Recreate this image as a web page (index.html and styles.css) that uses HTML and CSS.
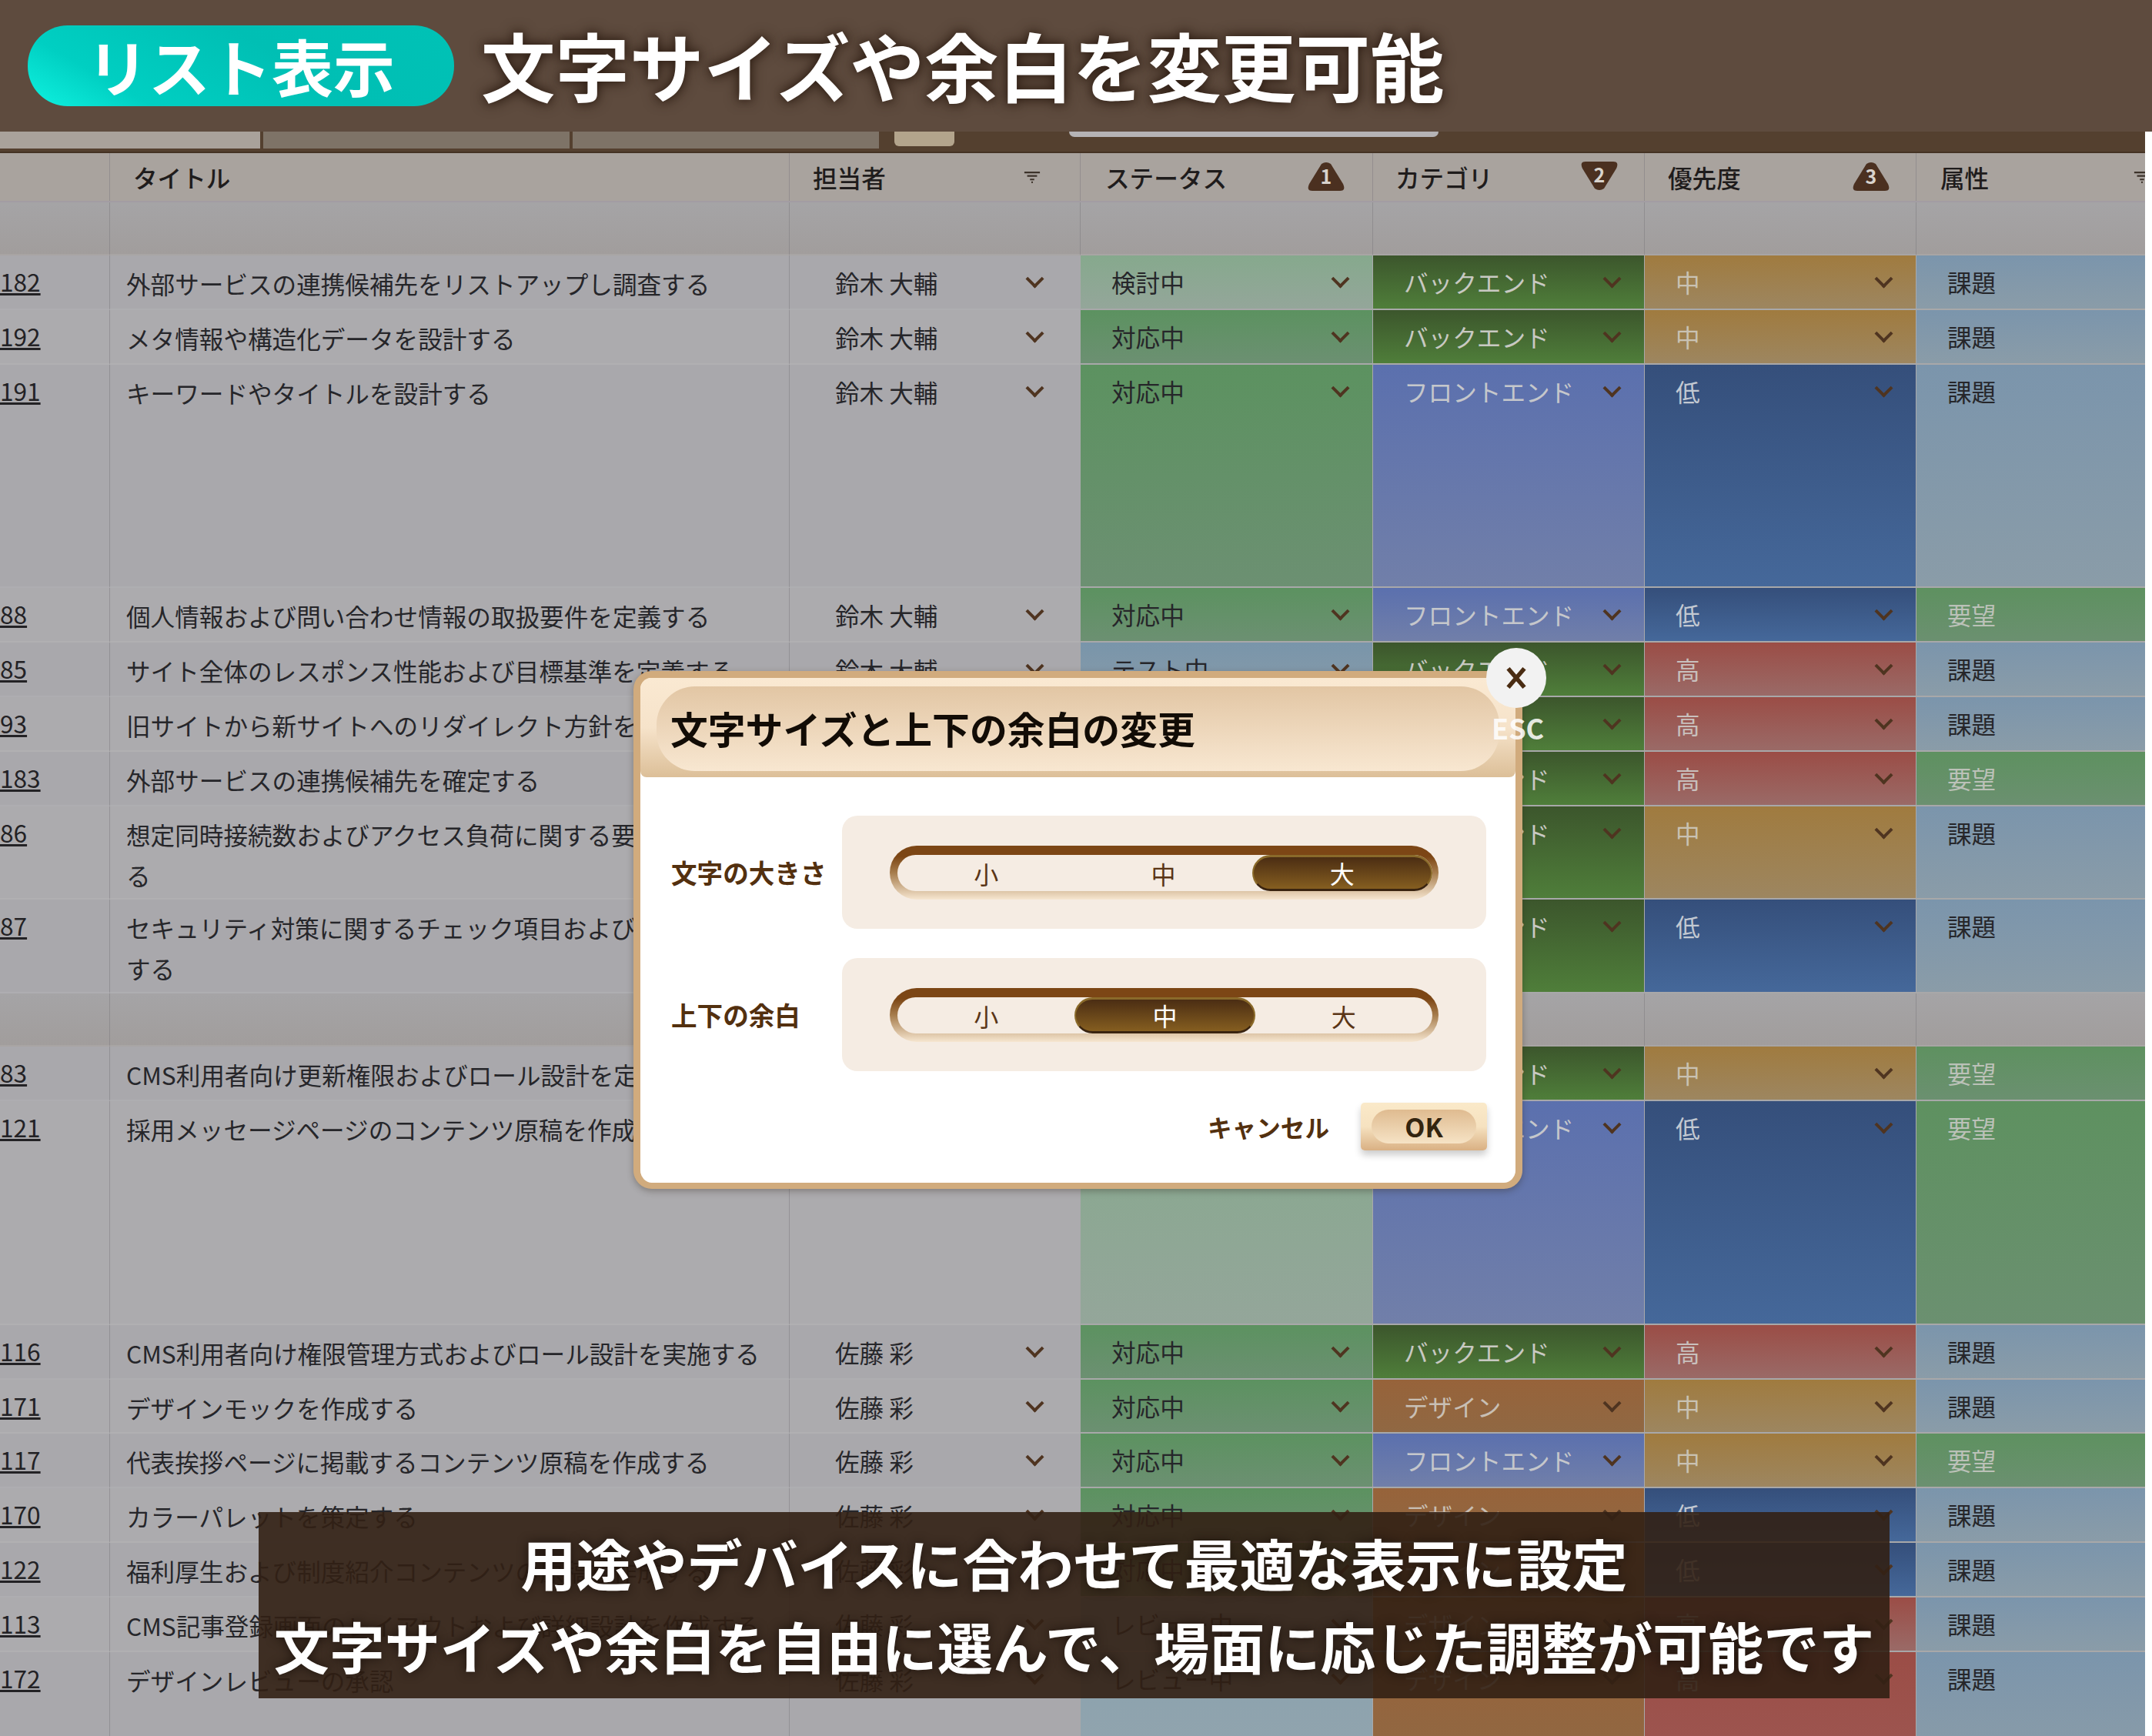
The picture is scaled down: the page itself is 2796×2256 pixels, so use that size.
FILE: index.html
```html
<!DOCTYPE html>
<html lang="ja">
<head>
    <meta charset="UTF-8">
    <meta name="viewport" content="width=device-width, initial-scale=1.0">
    <title>リスト表示</title>
    <link rel="stylesheet" href="styles.css">
</head>
<body>
    <header class="topbar">
        <span class="topbar-pill">リスト表示</span>
        <h1 class="topbar-title">文字サイズや余白を変更可能</h1>
    </header>

    <div class="tabstrip">
        <span class="tab tab-on"></span>
        <span class="tab"></span>
        <span class="tab"></span>
        <span class="tab-add"></span>
        <span class="tab-search"></span>
    </div>

    <div class="table">
        <div class="row head">
            <div class="cell"></div>
            <div class="cell head-title">タイトル</div>
            <div class="cell head-person">担当者
                <svg class="filter" viewBox="0 0 24 18"><path d="M1 2h22M5 7h14M9 12h6M11 16h2" stroke="#3d332b" stroke-width="2.4" fill="none"/></svg>
            </div>
            <div class="cell head-status">ステータス
                <svg class="badge" viewBox="0 0 48 38"><path d="M18 3Q24 -1 30 3L46 29Q50 38 42 38H6Q-2 38 2 29Z" fill="#4b3020"/><text x="24" y="29" text-anchor="middle">1</text></svg>
            </div>
            <div class="cell head-cat">カテゴリ
                <svg class="badge" viewBox="0 0 48 38"><path d="M18 35Q24 39 30 35L46 9Q50 0 42 0H6Q-2 0 2 9Z" fill="#4b3020"/><text x="24" y="27" text-anchor="middle">2</text></svg>
            </div>
            <div class="cell head-pri">優先度
                <svg class="badge" viewBox="0 0 48 38"><path d="M18 3Q24 -1 30 3L46 29Q50 38 42 38H6Q-2 38 2 29Z" fill="#4b3020"/><text x="24" y="29" text-anchor="middle">3</text></svg>
            </div>
            <div class="cell head-attr">属性
                <svg class="filter" viewBox="0 0 24 18"><path d="M1 2h22M5 7h14M9 12h6M11 16h2" stroke="#3d332b" stroke-width="2.4" fill="none"/></svg>
            </div>
        </div>

        <div class="row group group-first"><div class="cell"></div><div class="cell"></div><div class="cell"></div><div class="cell"></div><div class="cell"></div><div class="cell"></div><div class="cell"></div></div>

        <div class="row">
            <div class="cell id">182</div><div class="cell name">外部サービスの連携候補先をリストアップし調査する</div>
            <div class="cell person sel">鈴木 大輔</div><div class="cell st-review sel">検討中</div><div class="cell cat-back sel">バックエンド</div><div class="cell pri-mid sel">中</div><div class="cell attr-issue">課題</div>
        </div>
        <div class="row">
            <div class="cell id">192</div><div class="cell name">メタ情報や構造化データを設計する</div>
            <div class="cell person sel">鈴木 大輔</div><div class="cell st-doing sel">対応中</div><div class="cell cat-back sel">バックエンド</div><div class="cell pri-mid sel">中</div><div class="cell attr-issue">課題</div>
        </div>
        <div class="row tall">
            <div class="cell id">191</div><div class="cell name">キーワードやタイトルを設計する</div>
            <div class="cell person sel">鈴木 大輔</div><div class="cell st-doing sel">対応中</div><div class="cell cat-front sel">フロントエンド</div><div class="cell pri-low sel">低</div><div class="cell attr-issue">課題</div>
        </div>
        <div class="row">
            <div class="cell id">88</div><div class="cell name">個人情報および問い合わせ情報の取扱要件を定義する</div>
            <div class="cell person sel">鈴木 大輔</div><div class="cell st-doing sel">対応中</div><div class="cell cat-front sel">フロントエンド</div><div class="cell pri-low sel">低</div><div class="cell attr-want">要望</div>
        </div>
        <div class="row">
            <div class="cell id">85</div><div class="cell name">サイト全体のレスポンス性能および目標基準を定義する</div>
            <div class="cell person sel">鈴木 大輔</div><div class="cell st-test sel">テスト中</div><div class="cell cat-back sel">バックエンド</div><div class="cell pri-high sel">高</div><div class="cell attr-issue">課題</div>
        </div>
        <div class="row">
            <div class="cell id">93</div><div class="cell name">旧サイトから新サイトへのリダイレクト方針を</div>
            <div class="cell person"></div><div class="cell st-doing"></div><div class="cell cat-back sel"></div><div class="cell pri-high sel">高</div><div class="cell attr-issue">課題</div>
        </div>
        <div class="row">
            <div class="cell id">183</div><div class="cell name">外部サービスの連携候補先を確定する</div>
            <div class="cell person"></div><div class="cell st-doing"></div><div class="cell cat-back sel">バックエンド</div><div class="cell pri-high sel">高</div><div class="cell attr-want">要望</div>
        </div>
        <div class="row two">
            <div class="cell id">86</div><div class="cell name">想定同時接続数およびアクセス負荷に関する要<br>る</div>
            <div class="cell person"></div><div class="cell st-doing"></div><div class="cell cat-back sel">バックエンド</div><div class="cell pri-mid sel">中</div><div class="cell attr-issue">課題</div>
        </div>
        <div class="row two">
            <div class="cell id">87</div><div class="cell name">セキュリティ対策に関するチェック項目および<br>する</div>
            <div class="cell person"></div><div class="cell st-doing"></div><div class="cell cat-back sel">バックエンド</div><div class="cell pri-low sel">低</div><div class="cell attr-issue">課題</div>
        </div>

        <div class="row group"><div class="cell"></div><div class="cell"></div><div class="cell"></div><div class="cell"></div><div class="cell"></div><div class="cell"></div><div class="cell"></div></div>

        <div class="row">
            <div class="cell id">83</div><div class="cell name">CMS利用者向け更新権限およびロール設計を定</div>
            <div class="cell person"></div><div class="cell st-doing"></div><div class="cell cat-back sel">バックエンド</div><div class="cell pri-mid sel">中</div><div class="cell attr-want">要望</div>
        </div>
        <div class="row tall">
            <div class="cell id">121</div><div class="cell name">採用メッセージページのコンテンツ原稿を作成</div>
            <div class="cell person"></div><div class="cell st-review"></div><div class="cell cat-front sel">フロントエンド</div><div class="cell pri-low sel">低</div><div class="cell attr-want">要望</div>
        </div>
        <div class="row">
            <div class="cell id">116</div><div class="cell name">CMS利用者向け権限管理方式およびロール設計を実施する</div>
            <div class="cell person sel">佐藤 彩</div><div class="cell st-doing sel">対応中</div><div class="cell cat-back sel">バックエンド</div><div class="cell pri-high sel">高</div><div class="cell attr-issue">課題</div>
        </div>
        <div class="row">
            <div class="cell id">171</div><div class="cell name">デザインモックを作成する</div>
            <div class="cell person sel">佐藤 彩</div><div class="cell st-doing sel">対応中</div><div class="cell cat-design sel">デザイン</div><div class="cell pri-mid sel">中</div><div class="cell attr-issue">課題</div>
        </div>
        <div class="row">
            <div class="cell id">117</div><div class="cell name">代表挨拶ページに掲載するコンテンツ原稿を作成する</div>
            <div class="cell person sel">佐藤 彩</div><div class="cell st-doing sel">対応中</div><div class="cell cat-front sel">フロントエンド</div><div class="cell pri-mid sel">中</div><div class="cell attr-want">要望</div>
        </div>
        <div class="row">
            <div class="cell id">170</div><div class="cell name">カラーパレットを策定する</div>
            <div class="cell person sel">佐藤 彩</div><div class="cell st-doing sel">対応中</div><div class="cell cat-design sel">デザイン</div><div class="cell pri-low sel">低</div><div class="cell attr-issue">課題</div>
        </div>
        <div class="row">
            <div class="cell id">122</div><div class="cell name">福利厚生および制度紹介コンテンツの原稿を作成する</div>
            <div class="cell person sel">佐藤 彩</div><div class="cell st-doing sel">対応中</div><div class="cell cat-design sel">デザイン</div><div class="cell pri-low sel">低</div><div class="cell attr-issue">課題</div>
        </div>
        <div class="row">
            <div class="cell id">113</div><div class="cell name">CMS記事登録画面のレイアウトおよび詳細設計を作成する</div>
            <div class="cell person sel">佐藤 彩</div><div class="cell st-check sel">レビュー中</div><div class="cell cat-design sel">デザイン</div><div class="cell pri-high sel">高</div><div class="cell attr-issue">課題</div>
        </div>
        <div class="row last">
            <div class="cell id">172</div><div class="cell name">デザインレビューの承認</div>
            <div class="cell person sel">佐藤 彩</div><div class="cell st-check sel">レビュー中</div><div class="cell cat-design sel">デザイン</div><div class="cell pri-high sel">高</div><div class="cell attr-issue">課題</div>
        </div>
    </div>

    <div class="modal">
        <div class="modal-head">
            <h2 class="modal-title">文字サイズと上下の余白の変更</h2>
        </div>
        <div class="modal-body">
            <div class="setting">
                <span class="setting-label">文字の大きさ</span>
                <div class="setting-panel">
                    <div class="toggle">
                        <div class="toggle-inner">
                            <span class="seg">小</span>
                            <span class="seg">中</span>
                            <span class="seg seg-on">大</span>
                        </div>
                    </div>
                </div>
            </div>
            <div class="setting">
                <span class="setting-label">上下の余白</span>
                <div class="setting-panel">
                    <div class="toggle">
                        <div class="toggle-inner">
                            <span class="seg">小</span>
                            <span class="seg seg-on">中</span>
                            <span class="seg">大</span>
                        </div>
                    </div>
                </div>
            </div>
            <div class="modal-foot">
                <span class="cancel">キャンセル</span>
                <button class="ok"><span class="ok-inner">OK</span></button>
            </div>
        </div>
    </div>
    <div class="close">
        <svg viewBox="0 0 24 24"><path d="M6 5L18 19M18 5L6 19" stroke="#4a2c12" stroke-width="3.2" fill="none"/></svg>
    </div>
    <span class="esc">ESC</span>

    <div class="caption">
        <p>用途やデバイスに合わせて最適な表示に設定</p>
        <p>文字サイズや余白を自由に選んで、場面に応じた調整が可能です</p>
    </div>
</body>
</html>
```

FILE: styles.css
```css
html, body {
    margin: 0;
    padding: 0;
}
body {
    position: relative;
    width: 2796px;
    height: 2256px;
    overflow: hidden;
    background: #fff;
    font-family: "Noto Sans CJK JP", "Noto Sans", sans-serif;
    color: #26262a;
}

/* top banner */
.topbar {
    height: 171px;
    background: #5e4b3e;
    display: flex;
    align-items: center;
    gap: 35px;
    padding: 0 0 0 36px;
}
.topbar-pill {
    width: 554px;
    height: 105px;
    margin-top: -1px;
    border-radius: 52px;
    background: linear-gradient(30deg, #0ff2e0 0%, #00cfc2 22%, #00bfb4 60%, #00c2b6 100%);
    color: #fff;
    font-size: 80px;
    font-weight: 700;
    line-height: 103px;
    text-align: center;
}
.topbar-title {
    margin: -4px 0 0;
    color: #fff;
    font-size: 96.5px;
    font-weight: 700;
    line-height: 1;
    text-shadow: 0 0 18px #2a1a10, 0 0 8px rgba(42, 26, 16, 0.5);
}

/* dimmed tab strip */
.tabstrip {
    position: relative;
    width: 2787px;
    height: 28px;
    display: flex;
    background: #54402f;
    border-bottom: 2px solid #453324;
    box-sizing: border-box;
}
.tab {
    width: 398px;
    height: 22px;
    margin-right: 4px;
    background: #7e7367;
}
.tab-on {
    width: 338px;
    background: #a9a29b;
}
.tab-add {
    width: 78px;
    height: 19px;
    margin-left: 16px;
    border-radius: 0 0 6px 6px;
    background: #b3a48c;
}
.tab-search {
    width: 480px;
    height: 7px;
    margin-left: 149px;
    border-radius: 0 0 20px 20px;
    background: #b5b3b5;
}

/* table */
.table {
    width: 2787px;
}
.row {
    display: grid;
    grid-template-columns: 142px 883px 378px 380px 353px 353px 298px;
    height: 70.9px;
    background: #a9a8ac;
    font-size: 31.6px;
    line-height: 53px;
}
.row:nth-child(even) {
    background: #acabae;
}
.row.tall {
    height: 290.6px;
}
.row.two {
    height: 121.4px;
}
.row.last {
    height: 140px;
}
.row.group {
    height: 69.5px;
    background: linear-gradient(#a5a4a6, #a19d9c);
}
.row.group-first {
    height: 69px;
}
.row.head {
    height: 64px;
    background: #a9a39e;
    border-bottom: 2px solid #a29da3;
    box-sizing: border-box;
    font-weight: 500;
    color: #1f1c1c;
    line-height: 60px;
}
.cell {
    position: relative;
    box-sizing: border-box;
    min-width: 0;
    padding-top: 10px;
    white-space: nowrap;
    overflow: hidden;
    border-left: 1px solid rgba(120, 118, 122, 0.45);
    border-bottom: 2px solid rgba(200, 200, 200, 0.18);
}
.cell:first-child {
    border-left: 0;
}
.head .cell {
    padding-top: 0;
    border-bottom: 0;
    display: flex;
    align-items: center;
    justify-content: space-between;
}
.group .cell {
    padding: 0;
}
.row .id {
    text-decoration: underline;
    padding-top: 7px;
    color: #232225;
}
.name {
    padding-left: 21px;
}
.person {
    padding-left: 59px;
    padding-top: 9px;
}
.head-title {
    padding-left: 30px;
}
.head-person {
    padding: 0 51px 0 30px;
}
.head-status {
    padding: 0 36px 0 32px;
}
.head-cat {
    padding: 0 34px 0 29px;
}
.head-pri {
    padding: 0 34px 0 30px;
}
.head-attr {
    padding: 0 0 0 31px;
}
.filter {
    width: 22px;
    height: 17px;
}
.head-attr .filter {
    margin-right: -7px;
}
.badge {
    width: 48px;
    height: 38px;
    margin-top: -2px;
    overflow: visible;
}
.badge text {
    fill: #d8d2cc;
    font-size: 25px;
    font-weight: 700;
}

/* select cells: value and chevron */
.st-review, .st-doing, .st-test, .st-check,
.cat-back, .cat-front, .cat-design,
.pri-mid, .pri-low, .pri-high,
.attr-issue, .attr-want {
    padding-left: 40px;
    padding-top: 8px;
    border-left: 1px solid #a9a9ab;
    border-bottom: 2px solid #a8a8a9;
}
.sel::after {
    content: "";
    position: absolute;
    top: 22px;
    right: 33px;
    width: 13px;
    height: 13px;
    border-right: 4px solid #4f3420;
    border-bottom: 4px solid #4f3420;
    transform: rotate(45deg);
}
.person.sel::after {
    right: 50px;
}
.st-review {
    background: linear-gradient(#86a98d, #94a69a);
}
.st-doing {
    background: linear-gradient(#5c9260, #6c9072);
}
.st-test {
    background: linear-gradient(#7995aa, #889ba9);
}
.st-check {
    background: linear-gradient(#8aa2ae, #92a4ae);
}
.cat-back {
    background: linear-gradient(#3c562c, #4f7e3a);
    color: #c8c9c2;
}
.cat-front {
    background: linear-gradient(#5b70ae, #717fa9);
    color: #c5c7cb;
}
.cat-design {
    background: linear-gradient(#97633a, #906843);
    color: #c8bfb4;
}
.pri-mid {
    background: linear-gradient(#a07b3f, #9d8660);
    color: #c9c2b3;
}
.pri-low {
    background: linear-gradient(#354f7b, #45689a);
    color: #c3c9d2;
}
.pri-high {
    background: linear-gradient(#9b4d46, #9a6a67);
    color: #c8c0bd;
}
.last .pri-high {
    background: linear-gradient(#9b4d46, #9d5651);
}
.attr-issue {
    background: linear-gradient(#7b95ac, #8a9ca8);
}
.attr-want {
    background: linear-gradient(#5e9160, #6b9070);
    color: #bbc1b8;
}

/* dialog */
.modal {
    position: absolute;
    top: 872px;
    left: 823px;
    width: 1155px;
    height: 673px;
    box-sizing: border-box;
    border: 9px solid #d1ab7d;
    border-bottom-width: 8px;
    border-radius: 24px;
    background: #fff;
    box-shadow: 0 3px 8px rgba(50, 40, 30, 0.35);
}
.modal-head {
    height: 129px;
    box-sizing: border-box;
    padding: 11px 21px 8px 21px;
    border-radius: 14px 14px 8px 8px;
    background: linear-gradient(#fae9d2, #f6e3ca 50%, #dcbf98);
}
.modal-title {
    height: 110px;
    margin: 0;
    padding-left: 18px;
    border-radius: 50px;
    background: linear-gradient(#e2c6a4, #f8e7d1);
    color: #120c06;
    font-size: 48.8px;
    font-weight: 700;
    line-height: 108px;
}
.modal-body {
    padding: 50px 37px 0 40px;
}
.setting {
    display: flex;
    align-items: center;
    margin-bottom: 38px;
}
.setting-label {
    width: 222px;
    color: #53300f;
    font-size: 33.6px;
    font-weight: 700;
}
.setting-panel {
    width: 837px;
    height: 147px;
    box-sizing: border-box;
    padding: 39px 62px 0;
    border-radius: 20px;
    background: #f5ece3;
}
.toggle {
    height: 70px;
    box-sizing: border-box;
    padding: 12px 8px 11px 10px;
    border-radius: 35px;
    background: linear-gradient(#7c4615 0%, #7c4615 20%, #a67c4c 50%, #f6e6d0 100%);
}
.toggle-inner {
    height: 47px;
    display: flex;
    border-radius: 24px;
    background: #f5ece3;
}
.seg {
    flex: 1;
    color: #5a3516;
    font-size: 32px;
    line-height: 49px;
    text-align: center;
}
.seg-on {
    box-sizing: border-box;
    border-top: 3px solid #8a6a2a;
    border-bottom: 3px solid #3a2410;
    border-left: 2px solid #8a6a2a;
    border-right: 2px solid #8a6a2a;
    border-radius: 24px;
    background: linear-gradient(#4b2d13, #855e20);
    color: #fff;
    line-height: 41px;
}
.modal-foot {
    display: flex;
    justify-content: flex-end;
    align-items: center;
    gap: 41px;
    margin-top: 41px;
}
.cancel {
    color: #53300f;
    font-size: 31.6px;
    font-weight: 700;
}
.ok {
    width: 164px;
    height: 62px;
    padding: 9px 14px;
    border: 0;
    border-radius: 5px;
    background: linear-gradient(#fae9c9, #f6e2c0 50%, #d9b083);
    box-shadow: 0 6px 10px rgba(0, 0, 0, 0.2);
    font-family: inherit;
}
.ok-inner {
    display: block;
    height: 44px;
    border-radius: 22px;
    background: linear-gradient(#dfbb90, #f6e3c5);
    color: #33240f;
    font-size: 34px;
    font-weight: 700;
    line-height: 44px;
}
.close {
    position: absolute;
    top: 842px;
    left: 1931px;
    width: 78px;
    height: 78px;
    border-radius: 50%;
    background: #f2f2f2;
    display: flex;
    align-items: center;
    justify-content: center;
}
.close svg {
    width: 42px;
    height: 42px;
}
.esc {
    position: absolute;
    top: 920px;
    left: 1938px;
    color: #fff;
    font-size: 36px;
    font-weight: 700;
    line-height: 50px;
    opacity: 0.85;
}

/* bottom caption */
.caption {
    position: absolute;
    top: 1965px;
    left: 336px;
    width: 2119px;
    height: 242px;
    box-sizing: border-box;
    padding-top: 11px;
    background: rgba(50, 32, 20, 0.9);
    color: #fff;
    font-size: 72px;
    font-weight: 700;
    line-height: 108px;
    text-align: center;
    text-shadow: 0 0 14px #1c120c;
}
.caption p {
    margin: 0;
}
```
